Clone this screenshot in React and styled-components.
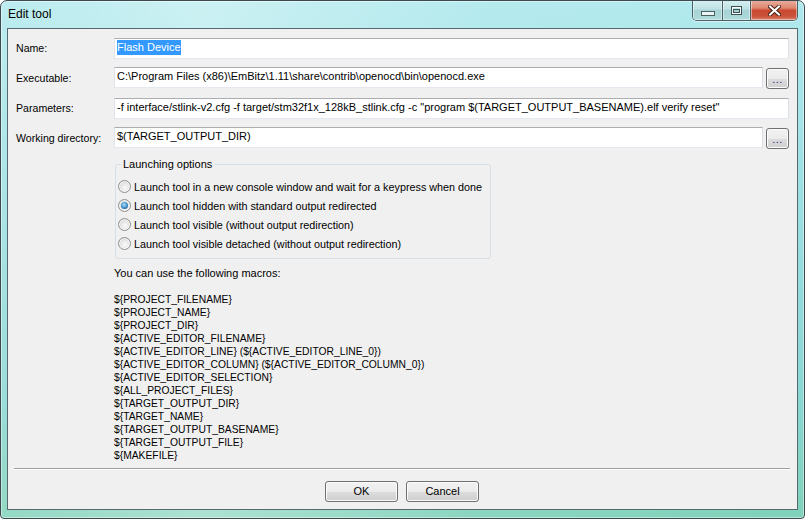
import styled, { createGlobalStyle, css } from 'styled-components';

const GlobalStyle = createGlobalStyle`
  html, body {
    margin: 0;
    padding: 0;
    background: #ffffff;
  }
  body {
    font-family: "Liberation Sans", Arial, sans-serif;
    font-size: 11px;
    color: #000;
  }
`;

const Window = styled.div`
  width: 805px;
  height: 519px;
  box-sizing: border-box;
  border: 1px solid #3d4b50;
  border-radius: 7px 7px 4px 4px;
  padding: 0 6px 8px;
  display: flex;
  flex-direction: column;
  overflow: hidden;
  box-shadow: inset 0 0 0 1px rgba(255, 255, 255, 0.45);
  background:
    linear-gradient(90deg, rgba(255, 255, 255, 0.15) 0%, rgba(255, 255, 255, 0.35) 25%, rgba(255, 255, 255, 0.08) 60%, rgba(255, 255, 255, 0) 100%),
    linear-gradient(180deg, #b0e9ed 0%, #9ee0e3 35%, #8ad7d4 75%, #80d2b9 100%);
`;

const TitleBar = styled.div`
  height: 27px;
  flex: none;
  display: flex;
  align-items: flex-start;
`;

const Title = styled.div`
  margin: 6px 0 0 1px;
  font-size: 12px;
  line-height: 15px;
  color: #000;
`;

const CaptionGroup = styled.div`
  margin: -1px 0 0 auto;
  height: 20px;
  display: flex;
  border: 1px solid #4b6166;
  border-top: none;
  border-radius: 0 0 5px 5px;
  overflow: hidden;
  box-shadow: 0 1px 0 rgba(255, 255, 255, 0.5);
`;

const CaptionButton = styled.div`
  width: ${(p) => p.$w}px;
  display: flex;
  align-items: center;
  justify-content: center;
  box-shadow: inset 0 0 0 1px rgba(255, 255, 255, 0.45);
  & + & {
    border-left: 1px solid #4b6166;
  }
  ${(p) =>
    p.$close
      ? css`
          background: linear-gradient(180deg, #eab0a2 0%, #de8670 40%, #c94a2f 52%, #c9503a 80%, #d9826a 100%);
        `
      : css`
          background: linear-gradient(180deg, #d6eff1 0%, #bfe2e4 45%, #a6d3d5 52%, #b0dadb 100%);
        `}
`;

const Client = styled.div`
  flex: 1;
  display: flex;
  flex-direction: column;
  background: #f0f0f0;
  border: 1px solid #56696e;
  padding: 9px 8px 0;
`;

const Row = styled.div`
  display: flex;
  align-items: center;
  margin-top: ${(p) => p.$top || 0}px;
`;

const Label = styled.div`
  width: 98px;
  flex: none;
  line-height: 13px;
  font-size: 10.6px;
`;

const Field = styled.div`
  flex: 1;
  height: 21px;
  box-sizing: border-box;
  background: #ffffff;
  border: 1px solid;
  border-color: #abadb3 #dbdfe6 #e3e9ef #e2e3ea;
  padding: 1px 2px 0;
  line-height: 15px;
  white-space: nowrap;
  overflow: hidden;
  align-self: flex-start;
`;

const Selected = styled.span`
  display: inline-block;
  background: #3399ff;
  color: #ffffff;
`;

const Browse = styled.div`
  width: 23px;
  height: 21px;
  box-sizing: border-box;
  margin: 1px 0 0 3px;
  align-self: flex-start;
  border: 1px solid #707070;
  border-radius: 3px;
  box-shadow: inset 0 0 0 1px #fbfbfb;
  background: linear-gradient(180deg, #f2f2f2 0%, #ebebeb 50%, #dddddd 51%, #cfcfcf 100%);
  display: flex;
  align-items: center;
  justify-content: center;
  color: #1e1e78;
  font-size: 11px;
  line-height: 11px;
  letter-spacing: 0.5px;
  padding-top: 2px;
`;

const Lower = styled.div`
  margin-left: 98px;
`;

const Group = styled.fieldset`
  margin: 9px 0 0 1px;
  width: 376px;
  box-sizing: border-box;
  border: 1px solid #d5dfe5;
  border-radius: 3px;
  padding: 6px 2px 5px;
  min-width: 0;
`;

const Legend = styled.legend`
  padding: 0 2px;
  margin-left: 3px;
  line-height: 13px;
`;

const RadioRow = styled.div`
  height: 19px;
  display: flex;
  align-items: center;
  gap: 3px;
  white-space: nowrap;
  font-size: 10.8px;
`;

const RadioDot = styled.span`
  width: 13px;
  height: 13px;
  box-sizing: border-box;
  flex: none;
  border-radius: 50%;
  border: 1px solid #8e8f8f;
  background: radial-gradient(circle at 55% 60%, #fbfbfb 0%, #e6e6e6 45%, #c9c9c9 100%);
  box-shadow: inset 0 0 0 1px rgba(255, 255, 255, 0.7);
  display: flex;
  align-items: center;
  justify-content: center;
  ${(p) =>
    p.$checked &&
    css`
      &::after {
        content: '';
        width: 7px;
        height: 7px;
        border-radius: 50%;
        background: radial-gradient(circle at 45% 40%, #b4e3fa 0%, #4b9ad0 45%, #15466f 100%);
      }
    `}
`;

const Macros = styled.div`
  margin-top: 8px;
  line-height: 13px;
`;

const MacroLine = styled.div`
  height: 13px;
  white-space: nowrap;
  font-size: ${(p) => (p.$code ? '10.3px' : '11px')};
`;

const Footer = styled.div`
  margin: auto -1px 0 -2px;
`;

const Separator = styled.div`
  border-top: 1px solid #a0a0a0;
  border-bottom: 1px solid #ffffff;
`;

const ButtonBar = styled.div`
  display: flex;
  justify-content: center;
  gap: 8px;
  padding: 11px 0 7px;
`;

const PushButton = styled.div`
  width: 73px;
  height: 21px;
  box-sizing: border-box;
  border: 1px solid #707070;
  border-radius: 3px;
  box-shadow: inset 0 0 0 1px #fbfbfb;
  background: linear-gradient(180deg, #f2f2f2 0%, #ebebeb 50%, #dddddd 51%, #cfcfcf 100%);
  display: flex;
  align-items: center;
  justify-content: center;
  line-height: 13px;
`;

const MinimizeIcon = () => (
  <svg width="14" height="6" viewBox="0 0 14 6" style={{ marginTop: 8 }}>
    <rect x="0.5" y="0.5" width="13" height="4" fill="#e9f4f5" stroke="#4d5f63" />
  </svg>
);

const MaximizeIcon = () => (
  <svg width="11" height="9" viewBox="0 0 11 9">
    <rect x="0.5" y="0.5" width="10" height="8" fill="none" stroke="#3f5053" />
    <rect x="1.5" y="1.5" width="8" height="6" fill="none" stroke="#f4fafa" />
    <rect x="2.5" y="3.5" width="6" height="3" fill="none" stroke="#3f5053" />
  </svg>
);

const CloseIcon = () => (
  <svg width="13" height="11" viewBox="0 0 13 11">
    <path d="M2 1.5 L11 9.5 M11 1.5 L2 9.5" stroke="#4a2319" strokeWidth="4" strokeLinecap="square" />
    <path d="M2 1.5 L11 9.5 M11 1.5 L2 9.5" stroke="#ffffff" strokeWidth="2" strokeLinecap="square" />
  </svg>
);

const options = [
  'Launch tool in a new console window and wait for a keypress when done',
  'Launch tool hidden with standard output redirected',
  'Launch tool visible (without output redirection)',
  'Launch tool visible detached (without output redirection)',
];

const macros = [
  '${PROJECT_FILENAME}',
  '${PROJECT_NAME}',
  '${PROJECT_DIR}',
  '${ACTIVE_EDITOR_FILENAME}',
  '${ACTIVE_EDITOR_LINE} (${ACTIVE_EDITOR_LINE_0})',
  '${ACTIVE_EDITOR_COLUMN} (${ACTIVE_EDITOR_COLUMN_0})',
  '${ACTIVE_EDITOR_SELECTION}',
  '${ALL_PROJECT_FILES}',
  '${TARGET_OUTPUT_DIR}',
  '${TARGET_NAME}',
  '${TARGET_OUTPUT_BASENAME}',
  '${TARGET_OUTPUT_FILE}',
  '${MAKEFILE}',
];

function App() {
  return (
    <>
      <GlobalStyle />
      <Window>
        <TitleBar>
          <Title>Edit tool</Title>
          <CaptionGroup>
            <CaptionButton $w={29}>
              <MinimizeIcon />
            </CaptionButton>
            <CaptionButton $w={27}>
              <MaximizeIcon />
            </CaptionButton>
            <CaptionButton $w={46} $close>
              <CloseIcon />
            </CaptionButton>
          </CaptionGroup>
        </TitleBar>
        <Client>
          <Row>
            <Label>Name:</Label>
            <Field>
              <Selected>Flash Device</Selected>
            </Field>
          </Row>
          <Row $top={8}>
            <Label>Executable:</Label>
            <Field>C:\Program Files (x86)\EmBitz\1.11\share\contrib\openocd\bin\openocd.exe</Field>
            <Browse>...</Browse>
          </Row>
          <Row $top={9}>
            <Label>Parameters:</Label>
            <Field>
              -f interface/stlink-v2.cfg -f target/stm32f1x_128kB_stlink.cfg -c "program $(TARGET_OUTPUT_BASENAME).elf verify reset"
            </Field>
          </Row>
          <Row $top={8}>
            <Label>Working directory:</Label>
            <Field>$(TARGET_OUTPUT_DIR)</Field>
            <Browse>...</Browse>
          </Row>
          <Lower>
            <Group>
              <Legend>Launching options</Legend>
              {options.map((text, i) => (
                <RadioRow key={text}>
                  <RadioDot $checked={i === 1} />
                  <span>{text}</span>
                </RadioRow>
              ))}
            </Group>
            <Macros>
              <MacroLine>You can use the following macros:</MacroLine>
              <MacroLine />
              {macros.map((m) => (
                <MacroLine key={m} $code>
                  {m}
                </MacroLine>
              ))}
            </Macros>
          </Lower>
          <Footer>
            <Separator />
            <ButtonBar>
              <PushButton>OK</PushButton>
              <PushButton>Cancel</PushButton>
            </ButtonBar>
          </Footer>
        </Client>
      </Window>
    </>
  );
}

export default App;
